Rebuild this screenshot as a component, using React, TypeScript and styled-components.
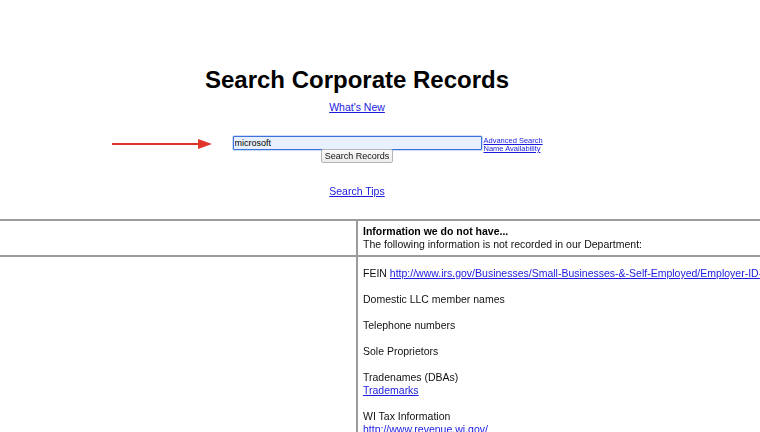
import React from "react";
import styled, { createGlobalStyle } from "styled-components";

const Global = createGlobalStyle`
  html, body {
    margin: 0;
    padding: 0;
    background: #ffffff;
    overflow: hidden;
  }
  body {
    font-family: "Liberation Sans", Arial, sans-serif;
    color: #111;
  }
`;

const Page = styled.div`
  width: 760px;
  height: 432px;
  overflow: hidden;
`;

const Header = styled.div`
  width: 714px;
  display: flex;
  flex-direction: column;
  align-items: center;
  padding-top: 66px;
`;

const Title = styled.h1`
  margin: 0;
  font-family: "Liberation Sans", Arial, sans-serif;
  font-weight: bold;
  font-size: 24px;
  line-height: 28px;
  color: #000;
`;

const Link = styled.a<{ $size?: number; $lh?: number }>`
  color: #1a1ae0;
  text-decoration: underline;
  font-size: ${(p) => p.$size ?? 10.5}px;
  line-height: ${(p) => p.$lh ?? 13}px;
  cursor: pointer;
`;

const CenterLink = styled(Link)<{ $top: number }>`
  display: block;
  margin-top: ${(p) => p.$top}px;
`;

const SearchForm = styled.form`
  width: 714px;
  margin-top: 22.5px;
  display: grid;
  grid-template-columns: 1fr auto 1fr;
  align-items: start;
`;

const ArrowCell = styled.div`
  justify-self: end;
  margin-right: 21px;
  margin-top: 2px;
  display: flex;
`;

const FieldColumn = styled.div`
  display: flex;
  flex-direction: column;
  align-items: center;
`;

const Field = styled.input`
  box-sizing: border-box;
  width: 249px;
  height: 14px;
  margin: 0;
  padding: 0 1px;
  border: 1px solid #3b73d9;
  border-radius: 1px;
  background: #e8f0fe;
  font-family: "Liberation Sans", Arial, sans-serif;
  font-size: 9px;
  color: #000;
  caret-color: #000;
  outline: none;
  box-shadow: 0 0 0 0.5px #9ab8ef;
`;

const SubmitButton = styled.button`
  box-sizing: border-box;
  width: 72px;
  height: 14px;
  margin-top: -1px;
  padding: 0;
  border: 1px solid #b5b5b5;
  border-radius: 2px;
  background: linear-gradient(#fafafa, #ececec);
  font-family: "Liberation Sans", Arial, sans-serif;
  font-size: 9px;
  line-height: 12px;
  color: #111;
`;

const SideLinks = styled.div`
  display: flex;
  flex-direction: column;
  align-items: flex-start;
  padding-left: 2px;
  margin-top: 1px;
`;

const InfoTable = styled.div`
  width: 960px;
  margin-top: 21.5px;
  border-top: 2px solid #9c9c9c;
  display: grid;
  grid-template-columns: 356px 1fr;
`;

const Cell = styled.div<{ $side: "left" | "right"; $pad: string; $rule?: boolean }>`
  padding: ${(p) => p.$pad};
  border-left: ${(p) => (p.$side === "right" ? "2px solid #9c9c9c" : "none")};
  border-bottom: ${(p) => (p.$rule ? "2px solid #9c9c9c" : "none")};
  font-size: 10.5px;
  line-height: 13px;
  color: #111;
  white-space: nowrap;
`;

const Lead = styled.div`
  font-weight: bold;
  color: #000;
`;

const Item = styled.div`
  margin-bottom: 13px;
`;

function Arrow() {
  return (
    <svg width="100" height="12" viewBox="0 0 100 12">
      <line x1="0" y1="6" x2="88" y2="6" stroke="#e3342b" strokeWidth="2" />
      <polygon points="86,1 100,6 86,11" fill="#e3342b" />
    </svg>
  );
}

export default function App() {
  return (
    <Page>
      <Global />
      <Header>
        <Title>Search Corporate Records</Title>
        <CenterLink $top={6.5}>What's New</CenterLink>
        <SearchForm onSubmit={(e) => e.preventDefault()}>
          <ArrowCell>
            <Arrow />
          </ArrowCell>
          <FieldColumn>
            <Field defaultValue="microsoft" autoFocus />
            <SubmitButton type="submit">Search Records</SubmitButton>
          </FieldColumn>
          <SideLinks>
            <Link $size={7.5} $lh={8}>Advanced Search</Link>
            <Link $size={7.5} $lh={8}>Name Availability</Link>
          </SideLinks>
        </SearchForm>
        <CenterLink $top={21.5}>Search Tips</CenterLink>
      </Header>
      <InfoTable>
        <Cell $side="left" $pad="4px 5px" $rule />
        <Cell $side="right" $pad="4px 5px 4px 5px" $rule>
          <Lead>Information we do not have...</Lead>
          <div>The following information is not recorded in our Department:</div>
        </Cell>
        <Cell $side="left" $pad="10px 5px" />
        <Cell $side="right" $pad="10px 5px">
          <Item>
            FEIN{" "}
            <Link>
              http://www.irs.gov/Businesses/Small-Businesses-&amp;-Self-Employed/Employer-ID-Numbers-EINs
            </Link>
          </Item>
          <Item>Domestic LLC member names</Item>
          <Item>Telephone numbers</Item>
          <Item>Sole Proprietors</Item>
          <Item>
            Tradenames (DBAs)
            <br />
            <Link>Trademarks</Link>
          </Item>
          <Item>
            WI Tax Information
            <br />
            <Link>http://www.revenue.wi.gov/</Link>
          </Item>
        </Cell>
      </InfoTable>
    </Page>
  );
}
